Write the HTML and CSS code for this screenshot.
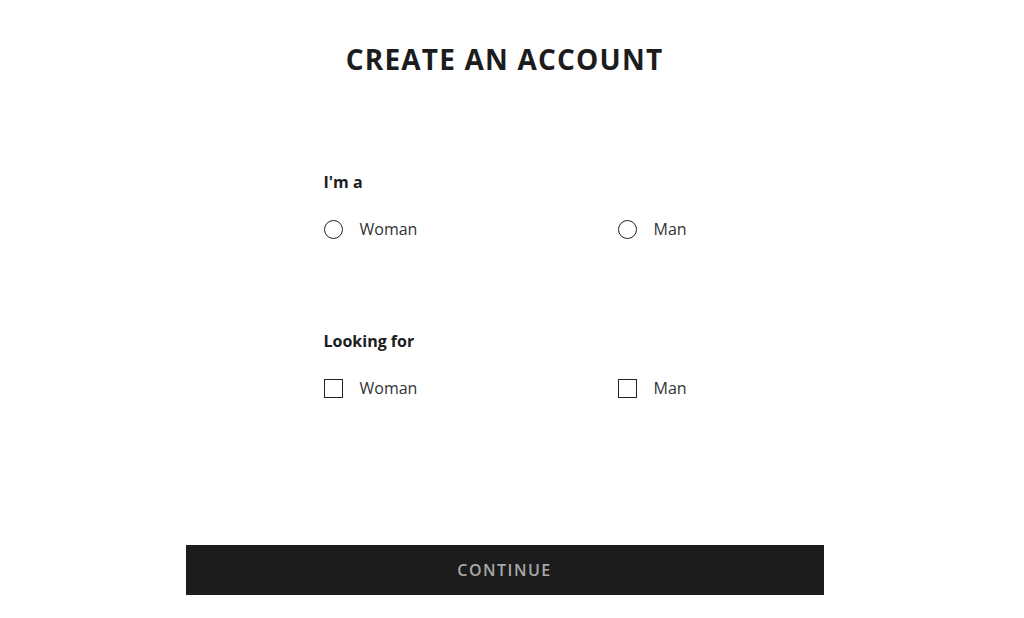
FILE: index.html
```html
<!DOCTYPE html>
<html lang="en">
<head>
  <meta charset="UTF-8" />
  <meta name="viewport" content="width=device-width, initial-scale=1.0"/>
  <title>Create an account</title>
  <link rel="stylesheet" href="styles.css">
</head>
<body>
  <div class="page">
    <h1>CREATE AN ACCOUNT</h1>
    <form class="signup">
      <fieldset class="group">
        <legend>I'm a</legend>
        <div class="options">
          <label class="option"><span class="radio"></span>Woman</label>
          <label class="option"><span class="radio"></span>Man</label>
        </div>
      </fieldset>
      <fieldset class="group">
        <legend>Looking for</legend>
        <div class="options">
          <label class="option"><span class="check"></span>Woman</label>
          <label class="option"><span class="check"></span>Man</label>
        </div>
      </fieldset>
      <button type="submit">CONTINUE</button>
    </form>
  </div>
</body>
</html>
```

FILE: styles.css
```css
body { margin: 0; background: #fff; color: #222; font-family: "Open Sans", "Noto Sans", Arial, sans-serif; }
.page { width: 1009px; display: flex; flex-direction: column; align-items: center; }
h1 { margin: 40px 0 0; font-size: 28px; line-height: 38px; font-weight: 700; letter-spacing: 1.2px; color: #1c1c1c; }
.signup { width: 638px; display: flex; flex-direction: column; margin-top: 92px; }
.group { border: none; margin: 0 0 0 138px; padding: 0; }
.group + .group { margin-top: 88px; }
legend { padding: 0; font-size: 16px; font-weight: 700; line-height: 24px; color: #1c1c1c; }
.options { display: grid; grid-template-columns: 294px 294px; margin-top: 23px; }
.option { display: flex; align-items: center; gap: 17px; font-size: 16px; line-height: 24px; color: #333; }
.radio, .check { width: 17px; height: 17px; border: 1.5px solid #222; flex: none; }
.radio { border-radius: 50%; }
button { margin-top: 145px; height: 50px; border: none; background: #1c1c1c; color: #a8a8a8; font-family: inherit; font-size: 16px; font-weight: 600; letter-spacing: 1.5px; cursor: pointer; }
```
